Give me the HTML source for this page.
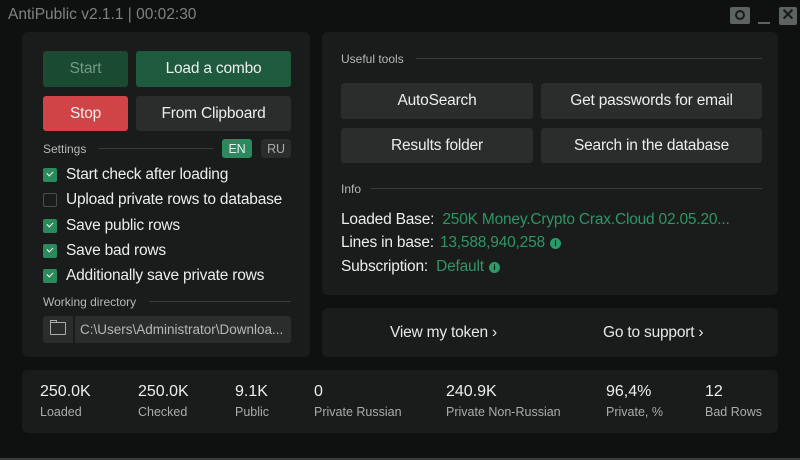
<!DOCTYPE html>
<html><head><meta charset="utf-8"><style>
*{margin:0;padding:0;box-sizing:border-box}
body{width:800px;height:460px;background:#0f1110;font-family:"Liberation Sans",sans-serif;color:#e6e8e7;position:relative;overflow:hidden}
.a{position:absolute}
.panel{position:absolute;background:#1a1c1b;border-radius:6px}
.btn{position:absolute;border-radius:3px;background:#2a2d2c;color:#eceeed;font-size:15.5px;display:flex;align-items:center;justify-content:center;letter-spacing:-0.2px}
.lbl{position:absolute;font-size:12px;color:#b4b8b6;display:flex;align-items:center}
.line{position:absolute;height:1px;background:#3a3d3c}
.cb{position:absolute;left:43px;width:14px;height:14px;border-radius:2px;background:#2a8a5e}
.cb.off{background:#1a1c1b;border:1px solid #4a4d4c}
.cb:not(.off)::after{content:"";position:absolute;left:4px;top:3px;width:5px;height:3px;border-left:1.6px solid #fff;border-bottom:1.6px solid #fff;transform:rotate(-45deg)}
.ct{position:absolute;left:66px;font-size:15.5px;color:#eceeed;letter-spacing:-0.2px}
.g{color:#2f9565}
.info{position:absolute;left:341px;font-size:15.5px;color:#eceeed;letter-spacing:-0.2px}
.i{display:inline-block;width:11px;height:11px;border-radius:50%;background:#2a9a68;color:#0f1110;font-size:8px;font-weight:bold;text-align:center;line-height:11px;vertical-align:1px;margin-left:5px}
.sv{position:absolute;top:383px;font-size:16px;color:#eceeed}
.sl{position:absolute;top:405px;font-size:12.5px;color:#a8acaa}
</style></head><body>
<div class="a" style="left:8px;top:6px;font-size:15.5px;color:#7e8381">AntiPublic v2.1.1 | 00:02:30</div>
<div class="a" style="left:730px;top:7px;width:20px;height:17px;background:#5c6361;border-radius:2px"></div>
<div class="a" style="left:735px;top:10px;width:10px;height:10px;border:2px solid #1a1c1b;border-radius:50%"></div>
<div class="a" style="left:758px;top:22px;width:12px;height:2px;background:#5c6361"></div>
<div class="a" style="left:779px;top:7px;width:18px;height:18px;background:#5c6361;border-radius:2px;color:#1a1c1b;font-size:16px;font-weight:bold;text-align:center;line-height:18px">✕</div>

<div class="panel" style="left:22px;top:32px;width:288px;height:325px"></div>
<div class="btn" style="left:43px;top:51px;width:85px;height:36px;background:#1b4a33;color:#6f9a84">Start</div>
<div class="btn" style="left:136px;top:51px;width:155px;height:36px;background:#1e5a3e">Load a combo</div>
<div class="btn" style="left:43px;top:96px;width:85px;height:35px;background:#d04448">Stop</div>
<div class="btn" style="left:136px;top:96px;width:155px;height:35px">From Clipboard</div>
<div class="lbl" style="left:43px;top:141px;height:15px">Settings</div>
<div class="line" style="left:98px;top:148px;width:116px"></div>
<div class="btn" style="left:222px;top:139px;width:30px;height:19px;background:#2a8a5e;font-size:12.5px">EN</div>
<div class="btn" style="left:261px;top:139px;width:30px;height:19px;font-size:12.5px;color:#a8acaa">RU</div>

<div class="cb" style="top:168px"></div><div class="ct" style="top:166px">Start check after loading</div>
<div class="cb off" style="top:193px"></div><div class="ct" style="top:191px">Upload private rows to database</div>
<div class="cb" style="top:219px"></div><div class="ct" style="top:217px">Save public rows</div>
<div class="cb" style="top:244px"></div><div class="ct" style="top:242px">Save bad rows</div>
<div class="cb" style="top:269px"></div><div class="ct" style="top:267px">Additionally save private rows</div>
<div class="lbl" style="left:43px;top:294px;height:15px">Working directory</div>
<div class="line" style="left:149px;top:301px;width:142px"></div>
<div class="a" style="left:43px;top:316px;width:30px;height:27px;background:#2a2d2c;border-radius:3px 0 0 3px"></div>
<div class="a" style="left:50px;top:322px;width:16px;height:13px;border:1.6px solid #a8acaa;border-radius:1px"></div>
<div class="a" style="left:50px;top:320px;width:7px;height:3px;border:1.6px solid #a8acaa;border-bottom:none"></div>
<div class="a" style="left:75px;top:316px;width:216px;height:27px;background:#2a2d2c;border-radius:0 3px 3px 0;font-size:13.5px;color:#b4b8b6;line-height:27px;padding-left:5px;white-space:nowrap;overflow:hidden">C:\Users\Administrator\Downloa...</div>

<div class="panel" style="left:322px;top:32px;width:456px;height:263px"></div>
<div class="lbl" style="left:341px;top:51px;height:15px">Useful tools</div>
<div class="line" style="left:416px;top:58px;width:346px"></div>
<div class="btn" style="left:341px;top:83px;width:192px;height:36px">AutoSearch</div>
<div class="btn" style="left:541px;top:83px;width:221px;height:36px">Get passwords for email</div>
<div class="btn" style="left:341px;top:128px;width:192px;height:35px">Results folder</div>
<div class="btn" style="left:541px;top:128px;width:221px;height:35px">Search in the database</div>
<div class="lbl" style="left:341px;top:181px;height:15px">Info</div>
<div class="line" style="left:370px;top:188px;width:392px"></div>
<div class="info" style="top:211px">Loaded Base: <span class="g" style="margin-left:4px">250K Money.Crypto Crax.Cloud 02.05.20...</span></div>
<div class="info" style="top:234px">Lines in base: <span class="g" style="margin-left:2px">13,588,940,258</span><span class="i">i</span></div>
<div class="info" style="top:258px">Subscription: <span class="g" style="margin-left:4px">Default</span><span class="i">i</span></div>

<div class="panel" style="left:322px;top:308px;width:456px;height:49px"></div>
<div class="a" style="left:390px;top:324px;font-size:15.5px;letter-spacing:-0.2px">View my token ›</div>
<div class="a" style="left:603px;top:324px;font-size:15.5px;letter-spacing:-0.2px">Go to support ›</div>

<div class="panel" style="left:22px;top:370px;width:756px;height:63px"></div>
<div class="sv" style="left:40px">250.0K</div><div class="sl" style="left:40px">Loaded</div>
<div class="sv" style="left:138px">250.0K</div><div class="sl" style="left:138px">Checked</div>
<div class="sv" style="left:235px">9.1K</div><div class="sl" style="left:235px">Public</div>
<div class="sv g" style="left:314px">0</div><div class="sl" style="left:314px">Private Russian</div>
<div class="sv g" style="left:446px">240.9K</div><div class="sl" style="left:446px">Private Non-Russian</div>
<div class="sv" style="left:606px">96,4%</div><div class="sl" style="left:606px">Private, %</div>
<div class="sv" style="left:705px">12</div><div class="sl" style="left:705px">Bad Rows</div>
<div class="a" style="left:0;top:458px;width:800px;height:2px;background:#3a3d3c"></div>
</body></html>
